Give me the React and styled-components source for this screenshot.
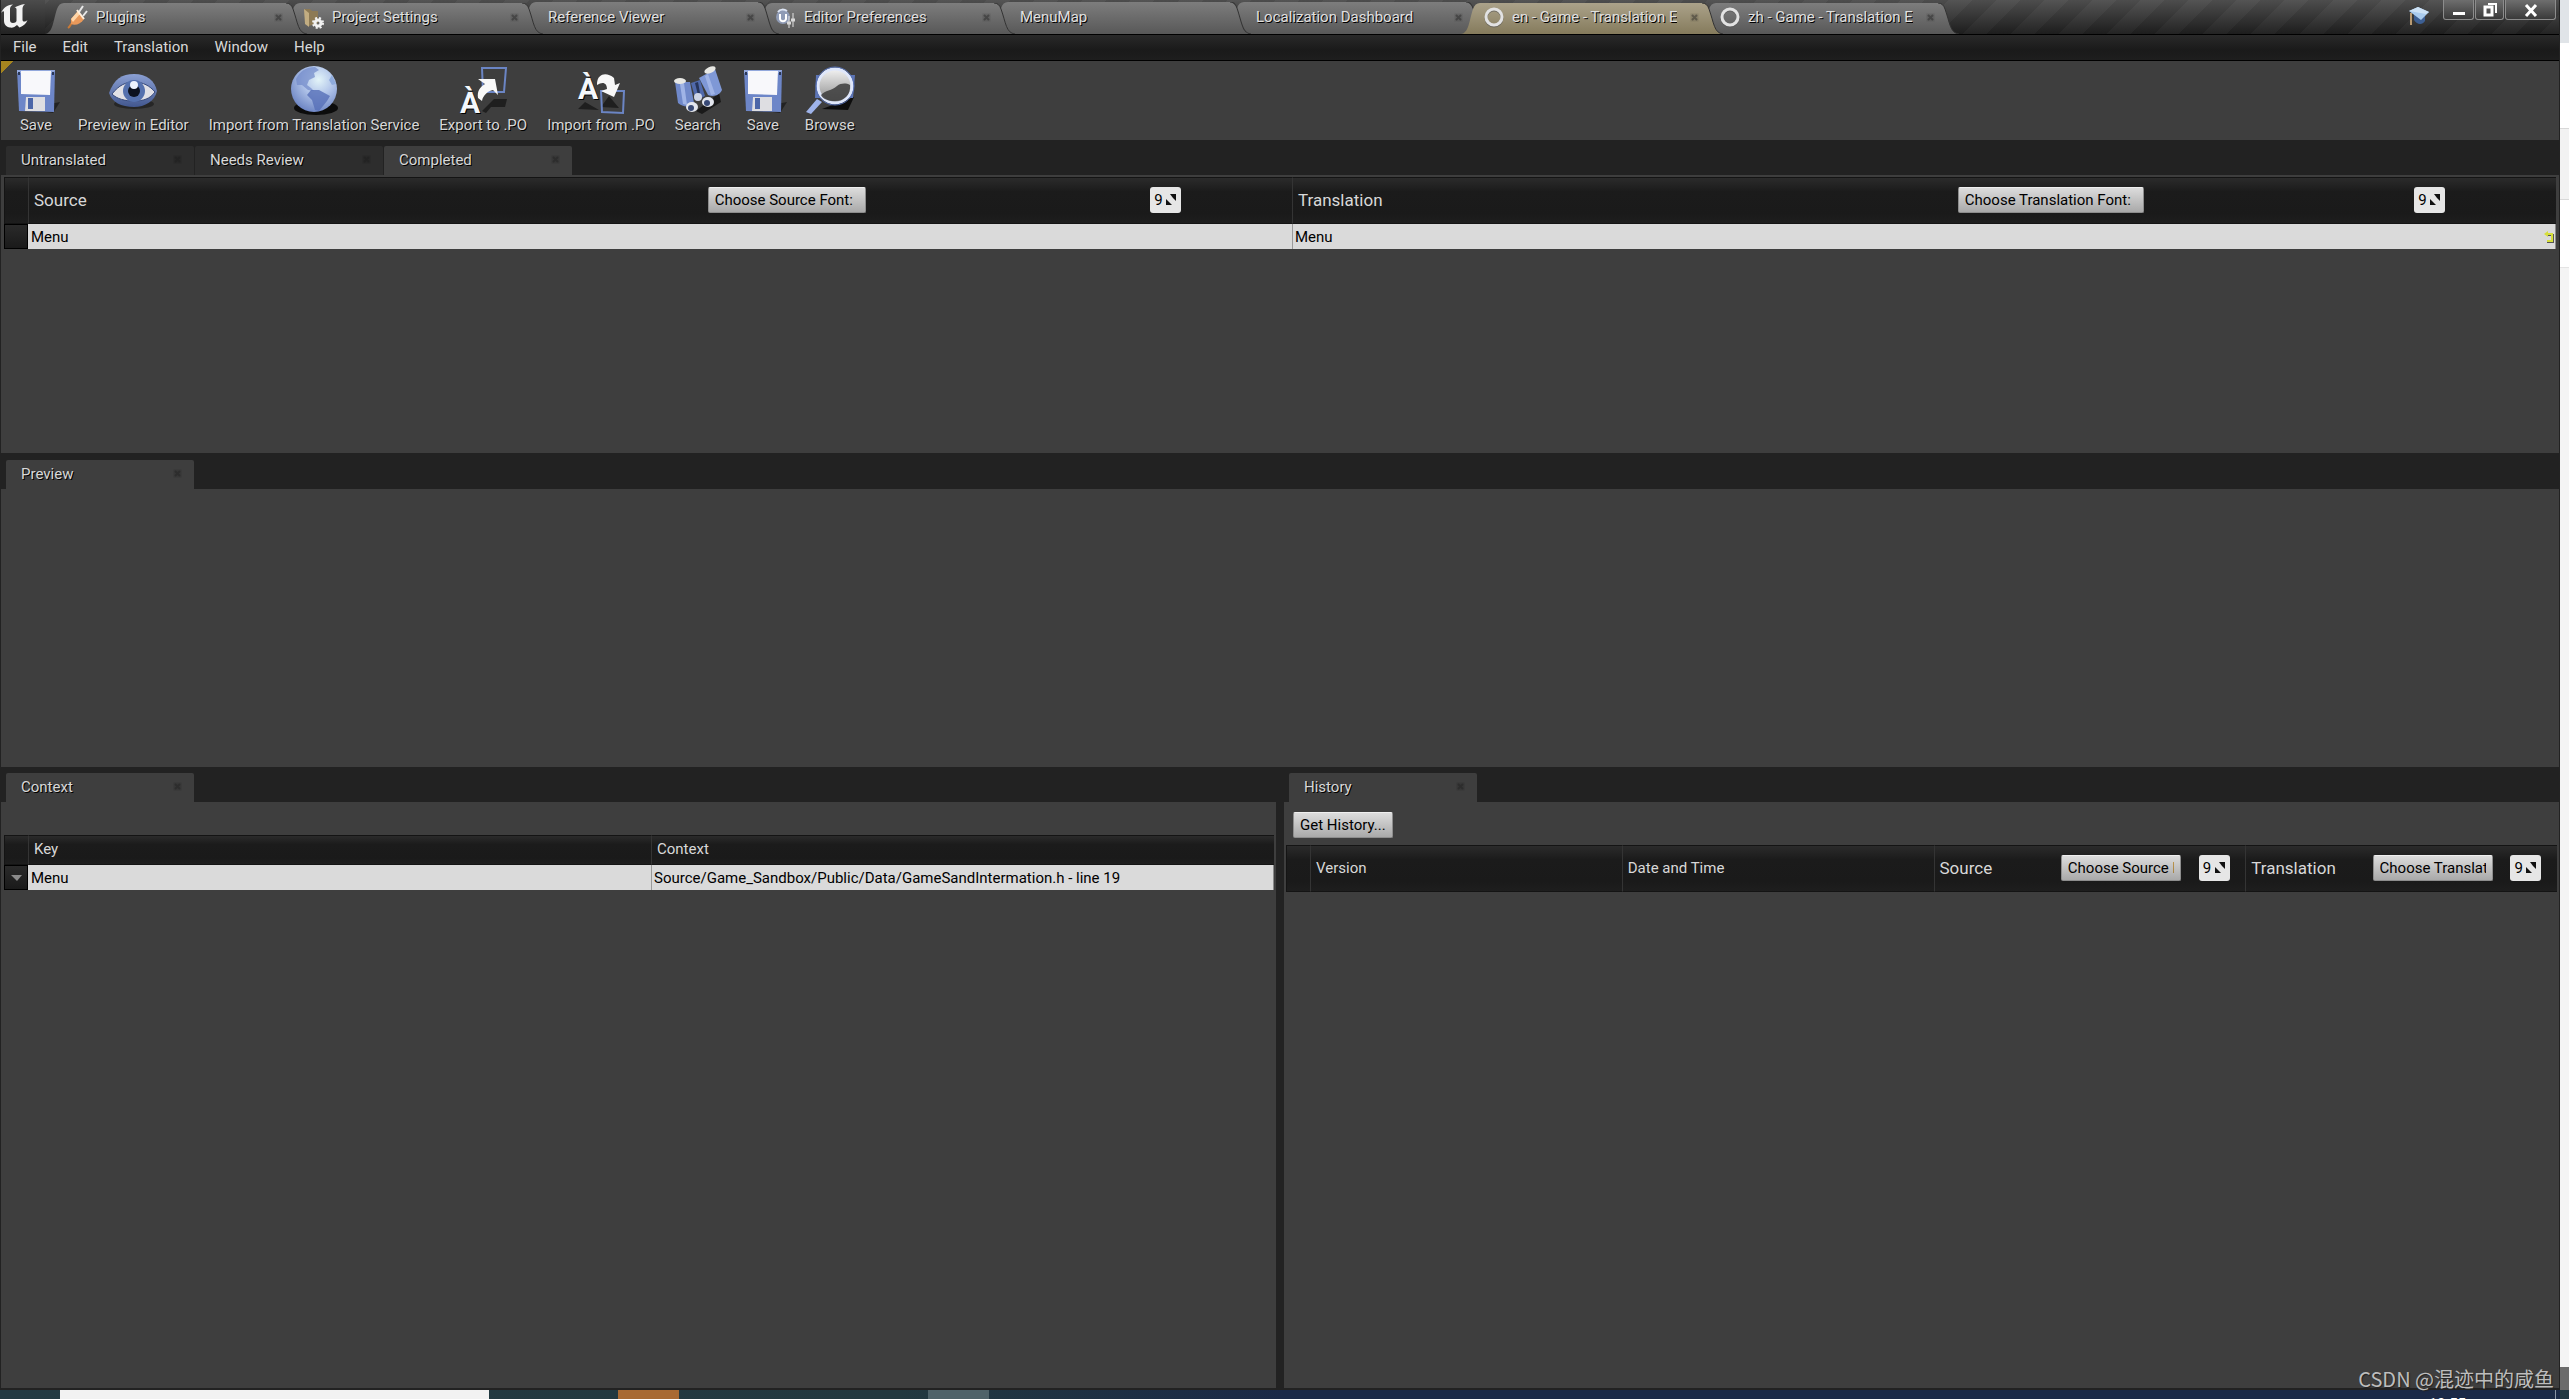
import React from "react";
import styled, { createGlobalStyle } from "styled-components";

const GlobalStyle = createGlobalStyle`
  * {
    box-sizing: border-box;
  }
  body {
    margin: 0;
    background: #f3f3f3;
    color: #d8d8d8;
    font-family: Roboto, "Liberation Sans", sans-serif;
    font-size: 15px;
    line-height: 20px;
  }
  button, input {
    font: inherit;
    color: inherit;
    margin: 0;
    padding: 0;
    border: 0;
    background: none;
  }
`;

const Desktop = styled.div`
  position: relative;
  height: 100vh;
  overflow: hidden;
  display: grid;
  grid-template-columns: minmax(0, 1fr) 9px;
  grid-template-rows: minmax(0, 1fr) 9px;
`;

const Backdrop = styled.div`
  background: linear-gradient(
    #e0e4e8 43px,
    #ffffff 43px 128px,
    #d8d8d8 128px 129px,
    #f2f2f2 129px 199px,
    #d8d8d8 199px 200px,
    #ffffff 200px 267px,
    #e4e4e4 267px 268px,
    #f4f4f4 268px calc(100% - 23px),
    #6c6c6c calc(100% - 23px)
  );
`;

const EditorWindow = styled.div`
  display: flex;
  flex-direction: column;
  min-height: 0;
  background: #222222;
  border: solid #222222;
  border-width: 0 1px 2px 1px;
`;

/* ---------- title bar ---------- */

const TitleBar = styled.header`
  display: flex;
  align-items: flex-end;
  height: 34px;
  background: linear-gradient(rgba(100, 100, 100, 0.6), rgba(22, 22, 22, 0.65)),
    repeating-linear-gradient(135deg, #2a2a2a 0 17px, #3c3c3c 17px 34px);
`;

const LogoBox = styled.div`
  flex: none;
  width: 44px;
  height: 34px;
  background: linear-gradient(#4c4c4c, #222222);
`;

const TabStrip = styled.nav`
  display: flex;
  align-items: flex-end;
  flex: 1;
  min-width: 0;
`;

const AppTab = styled.button`
  position: relative;
  z-index: ${(props) => props.$order};
  flex: none;
  display: flex;
  align-items: center;
  width: 262px;
  height: ${(props) => (props.$plain ? 32 : 31)}px;
  margin-right: -26px;
  padding: 0 24px ${(props) => (props.$plain ? 2 : 3)}px ${(props) => (props.$plain ? 31 : 22)}px;
  gap: 8px;
  text-align: left;
  text-shadow: 1px 1px 0 #000000;
  color: #e0e0e0;
`;

const TabShape = styled.svg`
  position: absolute;
  inset: 0;
  width: 100%;
  height: 100%;
  z-index: -1;
`;

const TabTitle = styled.span`
  flex: 1;
  min-width: 0;
  margin-right: 5px;
  overflow: hidden;
  white-space: nowrap;
`;

const WindowTools = styled.div`
  display: flex;
  align-self: flex-start;
  padding-right: 3px;
  gap: 1px;
`;

const WindowButton = styled.button`
  display: flex;
  align-items: center;
  justify-content: center;
  width: ${(props) => props.$width}px;
  height: 20px;
  border: 1px solid #8c8c8c;
  border-top: 0;
  border-radius: 0 0 3px 3px;
  background: linear-gradient(#6e6e6e, #3a3a3a);
`;

const CapBox = styled.div`
  padding: 6px 12px 0 0;
`;

/* ---------- menu and toolbar ---------- */

const MenuBar = styled.nav`
  display: flex;
  gap: 2px;
  height: 27px;
  flex: none;
  border: solid #000000;
  border-width: 1px 0;
  background: linear-gradient(#292929, #1a1a1a 60%, #1e1e1e);
`;

const MenuItem = styled.button`
  padding: 0 12px 2px;
`;

const ToolBar = styled.div`
  display: flex;
  flex: none;
  height: 79px;
  padding-left: 3px;
  background: linear-gradient(135deg, #a5841f 9px, transparent 9px), #3e3e3e;
`;

const Tool = styled.button`
  display: flex;
  flex-direction: column;
  align-items: center;
  min-width: 64px;
  padding: 4px 10px 0;
  text-shadow: 1px 1px 0 #000000;
`;

const ToolIcon = styled.svg`
  width: 52px;
  height: 50px;
  margin: 0 -6px;
`;

/* ---------- docked panels ---------- */

const Dock = styled.section`
  display: flex;
  flex-direction: column;
  min-width: 0;
  min-height: 0;
  flex: ${(props) => props.$weight} 1 0;
`;

const DockTabs = styled.div`
  display: flex;
  gap: 1px;
  flex: none;
  height: ${(props) => props.$height || 36}px;
  padding: ${(props) => (props.$height === 35 ? 6 : 7)}px 5px 0;
`;

const DockTab = styled.button`
  display: flex;
  align-items: center;
  justify-content: space-between;
  width: 188px;
  padding: 0 12px 2px 15px;
  border-radius: 2px 2px 0 0;
  background: ${(props) => (props.$active ? "#3e3e3e" : "#2d2d2d")};
  text-shadow: 1px 1px 0 #000000;
`;

const Panel = styled.div`
  flex: 1;
  min-height: 0;
  padding: ${(props) => props.$pad || "2px 3px 0"};
  background: #3e3e3e;
`;

const Split = styled.div`
  display: flex;
  gap: 8px;
  min-height: 0;
  flex: ${(props) => props.$weight} 1 0;
`;

const Table = styled.table`
  width: 100%;
  table-layout: fixed;
  border-collapse: separate;
  border-spacing: 0;
`;

const GutterCol = styled.col`
  width: 24px;
`;

const Th = styled.th`
  height: ${(props) => props.$height}px;
  padding: 0 0 2px 5px;
  border: solid #141414;
  border-width: 1px 0;
  border-left: 1px solid #343434;
  background: linear-gradient(#2b2b2b, #1b1b1b 30%, #1a1a1a 80%, #1e1e1e);
  font-weight: 400;
  text-align: left;
  &:first-child {
    border-left-color: #141414;
  }
`;

const Td = styled.td`
  height: 25px;
  padding: 0 1px 0 2px;
  border-left: 1px solid #9a9a9a;
  background: #dadada;
  color: #000000;
  &:nth-child(2) {
    border-left-color: #dadada;
  }
  &:last-child {
    border-right: 1px solid #8a8a8a;
  }
`;

const RowHandle = styled.td`
  height: 25px;
  padding: 0;
  border: 1px solid #000000;
  background: linear-gradient(#2a2a2a, #1a1a1a);
`;

const Arrow = styled.svg`
  display: block;
  margin: 0 auto;
`;

const CellLine = styled.div`
  display: flex;
  align-items: center;
  justify-content: space-between;
`;

const FontHeader = styled.div`
  display: grid;
  grid-template-columns: minmax(0, 40fr) minmax(0, 40fr) minmax(0, 20fr);
  align-items: center;
  justify-items: center;
  margin-left: -5px;
  font-size: 17px;
`;

const HeaderTitle = styled.span`
  justify-self: start;
  padding-left: 5px;
`;

const Button = styled.button`
  max-width: calc(100% - 4px);
  height: 26px;
  padding: 0 ${(props) => (props.$wide ? 12 : 6)}px 0 6px;
  border: 1px solid #8d8d8d;
  border-top-color: #efefef;
  border-radius: 2px;
  background: linear-gradient(#dcdcdc, #a9a9a9);
  color: #000000;
  font-size: 15px;
`;

const ButtonText = styled.span`
  display: block;
  overflow: hidden;
  white-space: nowrap;
`;

const Spin = styled.label`
  display: flex;
  align-items: center;
  width: 31px;
  height: 26px;
  padding-left: 4px;
  border-radius: 3px;
  background: #e6e6e6;
  color: #000000;
  font-size: 15px;
`;

const SpinInput = styled.input`
  width: 11px;
`;

const HistoryBar = styled.div`
  display: flex;
  padding: 0 7px 7px;
`;

/* ---------- desktop edge ---------- */

const TaskBar = styled.footer`
  grid-column: 1 / -1;
  display: flex;
  height: 9px;
  overflow: hidden;
  padding-left: 60px;
  background: linear-gradient(90deg, #223a42, #22383f 35%, #1b2947 50%, #1b2947 calc(100% - 9px), #223a42 calc(100% - 9px));
`;

const TaskItem = styled.div`
  flex: none;
  width: ${(props) => props.$width}px;
  margin-right: ${(props) => props.$gap}px;
  background: ${(props) => props.$color};
`;

const Clock = styled.time`
  margin-left: auto;
  padding: 4px 89px 0 0;
  margin-right: 13px;
  border-right: 1px solid #8a93a5;
  color: #ffffff;
  font-size: 15px;
`;

const Watermark = styled.div`
  position: absolute;
  right: 15px;
  bottom: 6px;
  z-index: 20;
  color: #bdbdbd;
  font: 20px/28px "Noto Sans CJK SC", sans-serif;
  text-shadow: 1px 1px 1px #222222;
`;

/* ---------- drawings ---------- */

const CloseMark = () => (
  <svg width="9" height="9" viewBox="0 0 9 9" opacity="0.6">
    <rect x="0.5" y="0.5" width="8" height="8" fill="#000" opacity="0.15" />
    <path d="M2 2l5 5M7 2l-5 5" stroke="#1c1c1c" strokeWidth="2" opacity="0.7" />
  </svg>
);

const UnrealLogo = () => (
  <svg width="44" height="34" viewBox="2 0 44 34">
    <path
      d="M2 13C4 8 8 5 14 4.500C12 6 11 7 11 9V20C11 22 12 23 14 23C16 23 17 22 17.500 21V9.500C17.500 8 16.500 7.500 15.500 7.500C18 6 22 4.500 26 4C24 6 23.500 7 23.500 9V20C24 22 26 22 28.500 20C27 24 24 26 20.500 27.500L18 25C16 27 13.500 28 11 27.500C7 27 5 24 5 21V12C5 10.500 3.500 11 2 13Z"
      fill="#f2f2f2"
    />
  </svg>
);

const TabIcon = ({ kind }) => {
  if (kind === "plug") {
    return (
      <svg width="21" height="28" viewBox="0 0 21 28">
        <path d="M1 25C4 23 3 21 6 19" stroke="#c87a38" strokeWidth="2" fill="none" />
        <path d="M12 9L16 3M16 13L20 8" stroke="#e9e9e9" strokeWidth="2" />
        <path d="M4 16L11 8L17 16C14 21 8 23 4 21Z" fill="#e8985a" />
        <path d="M4 16L11 8L13 11L6 19Z" fill="#ffd6a8" />
        <path d="M10 7L17 16" stroke="#fff0dd" strokeWidth="2" />
      </svg>
    );
  }
  if (kind === "gear") {
    return (
      <svg width="21" height="28" viewBox="0 0 21 28">
        <path d="M1 6H7L9 8H15V20L6 23Z" fill="#8d7a55" />
        <path d="M1 6L6 10V24L2 21Z" fill="#c2ad82" />
        <circle cx="15" cy="20" r="3" fill="none" stroke="#f1f1f1" strokeWidth="3" />
        <circle cx="15" cy="20" r="5" fill="none" stroke="#f1f1f1" strokeWidth="2" strokeDasharray="2 2" />
      </svg>
    );
  }
  if (kind === "prefs") {
    return (
      <svg width="21" height="28" viewBox="0 0 21 28">
        <circle cx="8" cy="14" r="7" fill="#8f9bb5" />
        <path d="M3 9C5 6 9 6 12 8" stroke="#dde5f5" strokeWidth="2" fill="none" />
        <path d="M5 11V16C6 19 10 19 11 16V11" stroke="#fff" strokeWidth="2" fill="none" />
        <path d="M14 13V25M18 10V24" stroke="#e4e4e4" strokeWidth="1" />
        <path d="M12 20H16M16 17H20" stroke="#d8d8d8" strokeWidth="3" />
      </svg>
    );
  }
  return (
    <svg width="21" height="22" viewBox="0 0 21 22">
      <circle cx="11" cy="12" r="8" fill="none" stroke="#555" strokeWidth="3" opacity="0.6" />
      <circle cx="11" cy="11" r="8" fill="none" stroke="#e2e2e2" strokeWidth="3" />
    </svg>
  );
};

const CapIcon = () => (
  <svg width="22" height="20" viewBox="0 0 22 20">
    <path d="M6 8V14C8 18 14 20 17 15V8Z" fill="#3d5f93" />
    <path d="M1 5L10 1L21 6L13 14Z" fill="#a9cbee" />
    <path d="M1 5L10 1L21 6L18 8Z" fill="#cde2f6" />
    <path d="M3 7V19" stroke="#b89a72" strokeWidth="2" />
  </svg>
);

const FloppyIcon = () => (
  <ToolIcon viewBox="0 0 52 50">
    <path d="M14 44L50 37L43 48Z" fill="#111" opacity="0.6" />
    <path d="M7 5H45L44 47L9 46Z" fill="#6d86c8" />
    <path d="M7 5H45L44 8H7Z" fill="#93a8dc" />
    <path d="M11 6H41L40 30L11 29Z" fill="#f8f8fb" />
    <path d="M16 32H35V46H15Z" fill="#dedee2" />
    <path d="M18 33H23V44H18Z" fill="#4c66a8" />
    <path d="M8 7h2v3h-2zM42 7h2v3h-2z" fill="#2b3858" />
  </ToolIcon>
);

const EyeIcon = () => (
  <ToolIcon viewBox="0 0 52 50">
    <defs>
      <linearGradient id="lid" x1="0" y1="0" x2="0" y2="1">
        <stop offset="0" stopColor="#8ba0d4" />
        <stop offset="1" stopColor="#42578f" />
      </linearGradient>
    </defs>
    <ellipse cx="27" cy="39" rx="20" ry="5" fill="#1c1c1c" opacity="0.7" />
    <path d="M2 28C7 14 15 9 27 9C40 9 48 16 50 26C48 36 38 42 27 42C14 42 5 37 2 28Z" fill="url(#lid)" />
    <path d="M5 29C12 20 19 17 27 17C36 17 43 21 48 27C43 34 36 36 27 36C18 36 10 34 5 29Z" fill="#e0e0e6" stroke="#35487a" strokeWidth="1" />
    <circle cx="27" cy="26" r="11" fill="#5571ae" />
    <circle cx="27" cy="26" r="6" fill="#0c1220" />
    <ellipse cx="27" cy="20" rx="4" ry="4" fill="#eef4ff" />
  </ToolIcon>
);

const GlobeIcon = () => (
  <ToolIcon viewBox="0 0 52 50">
    <defs>
      <radialGradient id="sea" cx="0.6" cy="0.3" r="0.8">
        <stop offset="0" stopColor="#e3f4f8" />
        <stop offset="0.4" stopColor="#b3c6ea" />
        <stop offset="1" stopColor="#6079bd" />
      </radialGradient>
    </defs>
    <ellipse cx="28" cy="43" rx="22" ry="7" fill="#0c0c0c" />
    <circle cx="26" cy="24" r="23" fill="url(#sea)" />
    <path d="M8 14C12 6 18 2 27 2L31 5L26 8L27 12L21 15L19 20L23 23L26 26L20 25L14 20L9 20Z" fill="#7189c9" opacity="0.7" />
    <path d="M23 25L31 25L42 31L39 36L31 46L27 45L24 35L19 30Z" fill="#566fb8" opacity="0.8" />
    <path d="M44 10L48 19L44 20L41 15Z" fill="#8fabdc" />
  </ToolIcon>
);

const LetterA = styled.text`
  font: 700 30px Roboto, sans-serif;
  fill: #f4f7fb;
`;

const ExportIcon = () => (
  <ToolIcon viewBox="0 0 52 50">
    <path d="M25 46L37 34H50L48 42H34L29 48Z" fill="#1f1f1f" />
    <path d="M25 3H49L47 27H26Z" fill="none" stroke="#6b85c4" strokeWidth="2" />
    <LetterA x="3" y="48">À</LetterA>
    <path d="M21 33C20 26 23 22 28 19L21 14L38 14L41 30L36 25C31 26 26 30 25 36Z" fill="#f8f8f8" />
  </ToolIcon>
);

const ImportIcon = () => (
  <ToolIcon viewBox="0 0 52 50">
    <path d="M3 44L10 37L24 45ZM34 31L44 43L26 42Z" fill="#1f1f1f" />
    <path d="M26 26H49L48 48L27 47Z" fill="none" stroke="#6b85c4" strokeWidth="2" />
    <LetterA x="3" y="34">À</LetterA>
    <path d="M22 18C23 8 32 7 39 13L40 20L45 18L39 32L26 26L32 24C32 18 28 16 22 20Z" fill="#f8f8f8" />
  </ToolIcon>
);

const BinocularsIcon = () => (
  <ToolIcon viewBox="0 0 52 50">
    <path d="M24 46L47 28L49 37L30 49Z" fill="#1a1a1a" />
    <path d="M3 17L18 17L22 38C18 43 11 42 6 38Z" fill="#7089ca" />
    <path d="M27 13L43 4L50 25C47 31 41 32 36 30Z" fill="#7f98d6" />
    <path d="M19 18L28 15L33 31L24 36Z" fill="#5069ab" />
    <path d="M23 18L26 17L28 28L26 30Z" fill="#26345a" />
    <path d="M8 19L12 18L15 40L11 39ZM33 11L36 9L43 29L39 30Z" fill="#a0b4e6" />
    <ellipse cx="8" cy="16" rx="6" ry="3" fill="#e8e8e4" />
    <ellipse cx="38" cy="5" rx="6" ry="3" transform="rotate(-25 38 5)" fill="#e8e8e4" />
    <ellipse cx="20" cy="42" rx="6" ry="5" fill="#e3e6ee" />
    <ellipse cx="19" cy="43" rx="3" ry="3" fill="#384975" />
    <ellipse cx="36" cy="37" rx="6" ry="5" fill="#e3e6ee" />
    <ellipse cx="35" cy="38" rx="3" ry="3" fill="#384975" />
    <circle cx="26" cy="32" r="4" fill="#cfd5e6" />
  </ToolIcon>
);

const BrowseIcon = () => (
  <ToolIcon viewBox="0 0 52 50">
    <defs>
      <linearGradient id="lens" x1="0" y1="0" x2="0" y2="1">
        <stop offset="0" stopColor="#f2f2f2" />
        <stop offset="1" stopColor="#8a8a8a" />
      </linearGradient>
    </defs>
    <path d="M18 44L50 32L44 45Z" fill="#0d0d0d" />
    <path d="M12 10H51L49 33H11Z" fill="#5d75b5" />
    <path d="M2 47L13 34L18 37L7 49Z" fill="#9eb3ea" />
    <circle cx="31" cy="21" r="17" fill="url(#lens)" stroke="#dfe7fb" strokeWidth="3" />
    <path d="M17 30C21 25 28 26 33 21C37 18 42 18 46 20C47 30 40 36 31 36C24 36 19 34 17 30Z" fill="#3c3c3c" opacity="0.85" />
    <circle cx="31" cy="21" r="19" fill="none" stroke="#5670b4" strokeWidth="1" />
  </ToolIcon>
);

const SpinArrows = () => (
  <svg width="12" height="12" viewBox="0 0 12 12">
    <path d="M5 0H11V7L8 4Z" fill="#111" />
    <path d="M1 5L7 11H1Z" fill="#111" />
  </svg>
);

const RevertIcon = () => (
  <svg width="10" height="12" viewBox="0 0 10 12">
    <path d="M3 4H9V11H3" fill="none" stroke="#555" strokeWidth="2" />
    <path d="M3 3H8V10H3" fill="none" stroke="#d6de3c" strokeWidth="2" />
    <path d="M0 3L4 0V6Z" fill="#d6de3c" />
  </svg>
);

/* ---------- data ---------- */

const appTabs = [
  { title: "Plugins", icon: "plug", close: true },
  { title: "Project Settings", icon: "gear", close: true },
  { title: "Reference Viewer", close: true },
  { title: "Editor Preferences", icon: "prefs", close: true },
  { title: "MenuMap" },
  { title: "Localization Dashboard", close: true },
  { title: "en - Game - Translation Editor", icon: "ring", close: true, active: true },
  { title: "zh - Game - Translation Editor", icon: "ring", close: true },
];

const menus = ["File", "Edit", "Translation", "Window", "Help"];

const tools = [
  { label: "Save", Icon: FloppyIcon },
  { label: "Preview in Editor", Icon: EyeIcon },
  { label: "Import from Translation Service", Icon: GlobeIcon },
  { label: "Export to .PO", Icon: ExportIcon },
  { label: "Import from .PO", Icon: ImportIcon },
  { label: "Search", Icon: BinocularsIcon },
  { label: "Save", Icon: FloppyIcon },
  { label: "Browse", Icon: BrowseIcon },
];

const TitleTab = ({ tab, order }) => {
  const id = `tab${order}`;
  return (
    <AppTab $order={order} $plain={!tab.icon}>
      <TabShape viewBox="0 0 262 31" preserveAspectRatio="none">
        <defs>
          <linearGradient id={id} x1="0" y1="0" x2="0" y2="1">
            <stop offset="0" stopColor={tab.active ? "#aba28a" : "#7d7d7d"} />
            <stop offset="1" stopColor={tab.active ? "#857b5c" : "#585858"} />
          </linearGradient>
        </defs>
        <path
          d="M0 31C8 30 8 18 12 6Q14 0 19 0H241Q246 0 248 6C253 20 253 30 262 31Z"
          fill={`url(#${id})`}
        />
        <path d="M241 0Q246 0 248 6C253 20 253 30 262 31" fill="none" stroke="#333" strokeWidth="1" />
      </TabShape>
      {tab.icon && <TabIcon kind={tab.icon} />}
      <TabTitle>{tab.title}</TabTitle>
      {tab.close && <CloseMark />}
    </AppTab>
  );
};

const FontPicker = ({ title, button, wide }) => (
  <FontHeader>
    <HeaderTitle>{title}</HeaderTitle>
    <Button $wide={wide}>
      <ButtonText>{button}</ButtonText>
    </Button>
    <Spin>
      <SpinInput defaultValue="9" aria-label={`${title} font size`} />
      <SpinArrows />
    </Spin>
  </FontHeader>
);

const DockTabItem = ({ title, active }) => (
  <DockTab $active={active}>
    {title}
    <CloseMark />
  </DockTab>
);

const App = () => (
  <Desktop>
    <GlobalStyle />
    <EditorWindow>
      <TitleBar>
        <LogoBox>
          <UnrealLogo />
        </LogoBox>
        <TabStrip>
          {appTabs.map((tab, i) => (
            <TitleTab key={tab.title} tab={tab} order={tab.active ? 10 : 9 - i} />
          ))}
        </TabStrip>
        <WindowTools>
          <CapBox>
            <CapIcon />
          </CapBox>
          <WindowButton $width={31} aria-label="Minimize">
            <svg width="14" height="14" viewBox="0 0 14 14">
              <path d="M1 9H13V12H1Z" fill="#fff" />
            </svg>
          </WindowButton>
          <WindowButton $width={29} aria-label="Restore">
            <svg width="14" height="14" viewBox="0 0 14 14">
              <path d="M5 1H13V10" fill="none" stroke="#fff" strokeWidth="2" />
              <rect x="2" y="4" width="7" height="8" fill="none" stroke="#fff" strokeWidth="3" />
            </svg>
          </WindowButton>
          <WindowButton $width={51} aria-label="Close">
            <svg width="14" height="14" viewBox="0 0 14 14">
              <path d="M2 2L12 13M12 2L2 13" stroke="#fff" strokeWidth="3" />
            </svg>
          </WindowButton>
        </WindowTools>
      </TitleBar>

      <MenuBar>
        {menus.map((menu) => (
          <MenuItem key={menu}>{menu}</MenuItem>
        ))}
      </MenuBar>

      <ToolBar>
        {tools.map(({ label, Icon }, i) => (
          <Tool key={i}>
            <Icon />
            {label}
          </Tool>
        ))}
      </ToolBar>

      <Dock $weight={313}>
        <DockTabs $height={35}>
          <DockTabItem title="Untranslated" />
          <DockTabItem title="Needs Review" />
          <DockTabItem title="Completed" active />
        </DockTabs>
        <Panel>
          <Table>
            <colgroup>
              <GutterCol />
              <col />
              <col />
            </colgroup>
            <thead>
              <tr>
                <Th $height={47} />
                <Th $height={47}>
                  <FontPicker title="Source" button="Choose Source Font:" wide />
                </Th>
                <Th $height={47}>
                  <FontPicker title="Translation" button="Choose Translation Font:" wide />
                </Th>
              </tr>
            </thead>
            <tbody>
              <tr>
                <RowHandle />
                <Td>Menu</Td>
                <Td>
                  <CellLine>
                    Menu
                    <RevertIcon />
                  </CellLine>
                </Td>
              </tr>
            </tbody>
          </Table>
        </Panel>
      </Dock>

      <Dock $weight={314}>
        <DockTabs>
          <DockTabItem title="Preview" active />
        </DockTabs>
        <Panel />
      </Dock>

      <Split $weight={621}>
        <Dock $weight={1}>
          <DockTabs $height={35}>
            <DockTabItem title="Context" active />
          </DockTabs>
          <Panel $pad="33px 2px 0 3px">
            <Table>
              <colgroup>
                <GutterCol />
                <col />
                <col />
              </colgroup>
              <thead>
                <tr>
                  <Th $height={30} />
                  <Th $height={30}>Key</Th>
                  <Th $height={30}>Context</Th>
                </tr>
              </thead>
              <tbody>
                <tr>
                  <RowHandle>
                    <Arrow width="11" height="6" viewBox="0 0 11 6">
                      <path d="M0 0H11L6 6Z" fill="#8a8a8a" />
                    </Arrow>
                  </RowHandle>
                  <Td>Menu</Td>
                  <Td>Source/Game_Sandbox/Public/Data/GameSandIntermation.h - line 19</Td>
                </tr>
              </tbody>
            </Table>
          </Panel>
        </Dock>
        <Dock $weight={1}>
          <DockTabs $height={35}>
            <DockTabItem title="History" active />
          </DockTabs>
          <Panel $pad="10px 2px 0">
            <HistoryBar>
              <Button>
                <ButtonText>Get History...</ButtonText>
              </Button>
            </HistoryBar>
            <Table>
              <colgroup>
                <GutterCol />
                <col />
                <col />
                <col />
                <col />
              </colgroup>
              <thead>
                <tr>
                  <Th $height={47} />
                  <Th $height={47}>Version</Th>
                  <Th $height={47}>Date and Time</Th>
                  <Th $height={47}>
                    <FontPicker title="Source" button="Choose Source Font:" />
                  </Th>
                  <Th $height={47}>
                    <FontPicker title="Translation" button="Choose Translation Font:" />
                  </Th>
                </tr>
              </thead>
            </Table>
          </Panel>
        </Dock>
      </Split>
    </EditorWindow>
    <Backdrop />
    <TaskBar>
      <TaskItem $width={429} $gap={129} $color="#f2f2f2" />
      <TaskItem $width={61} $gap={249} $color="#a86a34" />
      <TaskItem $width={61} $gap={0} $color="#4f6269" />
      <Clock>10:55</Clock>
    </TaskBar>
    <Watermark>CSDN @混迹中的咸鱼</Watermark>
  </Desktop>
);

export default App;
